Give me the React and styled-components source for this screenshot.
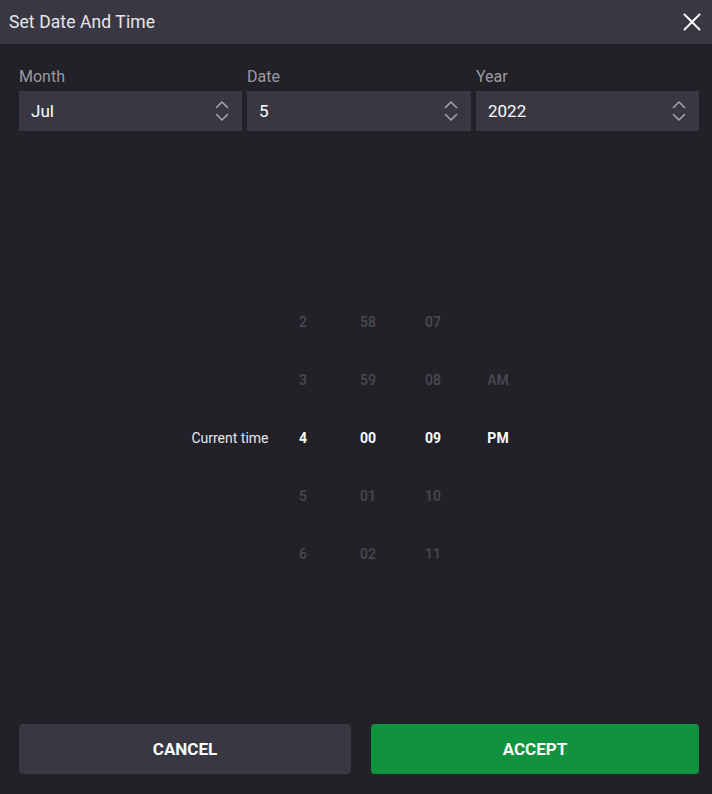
import React from 'react';
import styled, { createGlobalStyle } from 'styled-components';

const GlobalStyle = createGlobalStyle`
  html, body {
    margin: 0;
    padding: 0;
    background: #222127;
  }
  body {
    font-family: Roboto, "Noto Sans", sans-serif;
  }
`;

const Dialog = styled.div`
  width: 712px;
  height: 794px;
  display: flex;
  flex-direction: column;
  background: #222127;
  color: #ffffff;
`;

const Header = styled.div`
  height: 44px;
  display: flex;
  align-items: center;
  justify-content: space-between;
  padding: 0 10px 0 9px;
  background: #393842;
  box-sizing: border-box;
`;

const Title = styled.div`
  font-size: 17.5px;
  color: #e6e6ea;
  letter-spacing: 0.1px;
`;

const CloseButton = styled.button`
  width: 20px;
  height: 20px;
  padding: 0;
  border: none;
  background: none;
  display: flex;
  align-items: center;
  justify-content: center;
  cursor: pointer;
`;

const Body = styled.div`
  flex: 1;
  display: flex;
  flex-direction: column;
  padding: 20px 13px 20px 19px;
`;

const Fields = styled.div`
  display: grid;
  grid-template-columns: 223px 224px 223px;
  gap: 5px;
`;

const Field = styled.div`
  display: flex;
  flex-direction: column;
`;

const Label = styled.div`
  font-size: 16px;
  color: #9b9aa1;
  height: 27px;
  line-height: 26px;
`;

const Select = styled.div`
  height: 40px;
  display: flex;
  align-items: center;
  justify-content: space-between;
  padding: 0 13px 0 12px;
  background: #393842;
  font-size: 17px;
  color: #ffffff;
`;

const Picker = styled.div`
  flex: 1;
  display: flex;
  align-items: center;
  justify-content: center;
  padding-top: 21px;
`;

const PickerGrid = styled.div`
  display: grid;
  grid-template-columns: 96px 65px 65px 65px 65px;
  grid-auto-rows: 58px;
  align-items: center;
  margin-left: -13px;
`;

const CurrentLabel = styled.div`
  font-size: 14px;
  color: #e6e6ea;
  text-align: right;
  padding-right: 2px;
  white-space: nowrap;
`;

const Cell = styled.div`
  text-align: center;
  font-size: 14px;
  font-weight: ${(p) => (p.$active ? 700 : 500)};
  color: ${(p) => (p.$active ? '#ffffff' : '#4a4951')};
`;

const Actions = styled.div`
  display: grid;
  grid-template-columns: 332px 328px;
  gap: 20px;
`;

const ActionButton = styled.button`
  height: 50px;
  border: none;
  border-radius: 4px;
  background: ${(p) => (p.$primary ? '#10923e' : '#393842')};
  color: #ffffff;
  font-family: Roboto, "Noto Sans", sans-serif;
  font-size: 17px;
  font-weight: 700;
  text-transform: uppercase;
  cursor: pointer;
`;

const Chevrons = () => (
  <svg width="14" height="22" viewBox="0 0 14 22" fill="none" stroke="#a3a2a9" strokeWidth="1.6" strokeLinecap="round" strokeLinejoin="round">
    <path d="M1.5 7.5 L7 2 L12.5 7.5" />
    <path d="M1.5 14.5 L7 20 L12.5 14.5" />
  </svg>
);

const CloseIcon = () => (
  <svg width="18" height="18" viewBox="0 0 18 18" stroke="#ffffff" strokeWidth="2" strokeLinecap="round">
    <path d="M1.5 1.5 L16.5 16.5 M16.5 1.5 L1.5 16.5" />
  </svg>
);

const fields = [
  { label: 'Month', value: 'Jul' },
  { label: 'Date', value: '5' },
  { label: 'Year', value: '2022' },
];

const rows = [
  ['2', '58', '07', ''],
  ['3', '59', '08', 'AM'],
  ['4', '00', '09', 'PM'],
  ['5', '01', '10', ''],
  ['6', '02', '11', ''],
];

export default function App() {
  return (
    <>
      <GlobalStyle />
      <Dialog>
        <Header>
          <Title>Set Date And Time</Title>
          <CloseButton aria-label="Close">
            <CloseIcon />
          </CloseButton>
        </Header>
        <Body>
          <Fields>
            {fields.map((f) => (
              <Field key={f.label}>
                <Label>{f.label}</Label>
                <Select>
                  <span>{f.value}</span>
                  <Chevrons />
                </Select>
              </Field>
            ))}
          </Fields>
          <Picker>
            <PickerGrid>
              {rows.map((row, i) => (
                <React.Fragment key={i}>
                  <CurrentLabel>{i === 2 ? 'Current time' : ''}</CurrentLabel>
                  {row.map((v, j) => (
                    <Cell key={j} $active={i === 2}>{v}</Cell>
                  ))}
                </React.Fragment>
              ))}
            </PickerGrid>
          </Picker>
          <Actions>
            <ActionButton>Cancel</ActionButton>
            <ActionButton $primary>Accept</ActionButton>
          </Actions>
        </Body>
      </Dialog>
    </>
  );
}
